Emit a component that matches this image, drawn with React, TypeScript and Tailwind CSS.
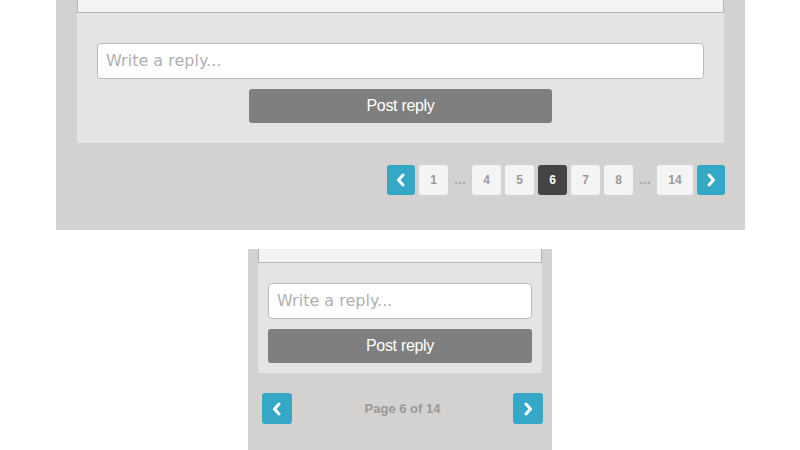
import React from "react";

function Chevron({ dir }: { dir: "left" | "right" }) {
  return (
    <svg width="10" height="14" viewBox="0 0 10 14" fill="none">
      {dir === "left" ? (
        <polyline points="7,2 2.5,7 7,12" stroke="white" strokeWidth="3" strokeLinecap="round" strokeLinejoin="round" />
      ) : (
        <polyline points="3,2 7.5,7 3,12" stroke="white" strokeWidth="3" strokeLinecap="round" strokeLinejoin="round" />
      )}
    </svg>
  );
}

function ArrowBtn({ dir, className = "" }: { dir: "left" | "right"; className?: string }) {
  return (
    <div className={`flex items-center justify-center rounded-[3px] bg-[#35a8c7] ${className}`}>
      <Chevron dir={dir} />
    </div>
  );
}

function PageBtn({ label, active = false, wide = false }: { label: string; active?: boolean; wide?: boolean }) {
  return (
    <div
      className={`flex h-[30px] items-center justify-center rounded-[3px] text-[12px] font-bold ${
        wide ? "w-[36px]" : "w-[29px]"
      } ${active ? "bg-[#444444] text-white" : "bg-[#f4f4f4] text-[#999999]"}`}
    >
      {label}
    </div>
  );
}

function Dots() {
  return <div className="flex h-[30px] w-[16px] items-end justify-center pb-[9px] text-[14px] font-bold leading-none text-[#aaaaaa]">...</div>;
}

export default function App() {
  const font = { fontFamily: '"Liberation Sans", Arial, sans-serif' };
  const phFont = '"DejaVu Sans", "Lucida Grande", sans-serif';
  return (
    <div className="h-[450px] w-[800px] overflow-hidden bg-white" style={font}>
      {/* Desktop version */}
      <div className="ml-[56px] h-[230px] w-[689px] bg-[#d3d2d0] px-[21px]">
        <div className="bg-[#e4e4e4]">
          <div className="h-[13px] border-x border-b border-[#b8b8b8] bg-[#f3f3f3]" />
          <div className="flex flex-col items-center px-[20px] pb-[20px] pt-[30px]">
            <div className="flex h-[36px] w-full items-center rounded-[4px] border border-[#bbbbbb] bg-white px-[8px]">
              <span className="text-[16px] text-[#b0b0b0]" style={{ fontFamily: phFont }}>Write a reply...</span>
            </div>
            <div className="mt-[10px] flex h-[34px] w-[303px] items-center justify-center rounded-[3px] bg-[#7f7f7f] text-[16px] tracking-[-0.3px] text-white">
              Post reply
            </div>
          </div>
        </div>
        <div className="mt-[22px] flex items-center justify-end gap-[4px] pr-0 mr-[-1px]">
          <ArrowBtn dir="left" className="h-[30px] w-[28px]" />
          <PageBtn label="1" />
          <Dots />
          <PageBtn label="4" />
          <PageBtn label="5" />
          <PageBtn label="6" active />
          <PageBtn label="7" />
          <PageBtn label="8" />
          <Dots />
          <PageBtn label="14" wide />
          <ArrowBtn dir="right" className="h-[30px] w-[28px]" />
        </div>
      </div>

      {/* Mobile version */}
      <div className="ml-[248px] mt-[19px] h-[201px] w-[304px] bg-[#d3d2d0] px-[10px]">
        <div className="bg-[#e4e4e4]">
          <div className="h-[14px] border-x border-b border-[#b8b8b8] bg-[#f3f3f3]" />
          <div className="flex flex-col px-[10px] pb-[10px] pt-[20px]">
            <div className="flex h-[36px] w-full items-center rounded-[4px] border border-[#bbbbbb] bg-white px-[8px]">
              <span className="text-[16px] text-[#b0b0b0]" style={{ fontFamily: phFont }}>Write a reply...</span>
            </div>
            <div className="mt-[10px] flex h-[34px] w-full items-center justify-center rounded-[3px] bg-[#7f7f7f] text-[16px] tracking-[-0.3px] text-white">
              Post reply
            </div>
          </div>
        </div>
        <div className="mt-[20px] ml-[4px] mr-[-1px] flex items-center justify-between">
          <ArrowBtn dir="left" className="h-[31px] w-[30px]" />
          <span className="text-[13px] font-bold text-[#999999]">Page 6 of 14</span>
          <ArrowBtn dir="right" className="h-[31px] w-[30px]" />
        </div>
      </div>
    </div>
  );
}
